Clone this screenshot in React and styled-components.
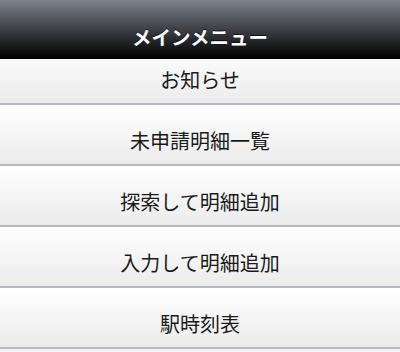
import styled, { createGlobalStyle } from "styled-components";

const GlobalStyle = createGlobalStyle`
  html, body {
    margin: 0;
    padding: 0;
    background: #ffffff;
  }
  body {
    font-family: "Noto Sans CJK JP", "Noto Sans", sans-serif;
  }
`;

const menuItems = [
  "お知らせ",
  "未申請明細一覧",
  "探索して明細追加",
  "入力して明細追加",
  "駅時刻表",
];

const Page = () => {
  return (
    <>
      <GlobalStyle />
      <Screen>
        <Header>
          <Title>メインメニュー</Title>
        </Header>
        <MenuList>
          {menuItems.map((label) => (
            <MenuRow key={label}>{label}</MenuRow>
          ))}
        </MenuList>
      </Screen>
    </>
  );
};

const Screen = styled.div`
  width: 400px;
  height: 352px;
  overflow: hidden;
  background: #f4f4f4;
`;

const Header = styled.header`
  position: relative;
  z-index: 1;
  height: 59px;
  box-sizing: border-box;
  padding-top: 16px;
  display: flex;
  justify-content: center;
  background: linear-gradient(to bottom, #7d828b 0%, #3c3f45 50%, #111214 85%, #000 100%);
`;

const Title = styled.h1`
  margin: 0;
  color: #ffffff;
  font-size: 19.5px;
  font-weight: bold;
  line-height: 42px;
  letter-spacing: 0;
  text-shadow: 0 -1px 0 rgba(0, 0, 0, 0.7);
`;

const MenuList = styled.nav`
  margin-top: -15px;
  display: flex;
  flex-direction: column;
`;

const MenuRow = styled.div`
  height: 61px;
  box-sizing: border-box;
  padding-top: 12px;
  display: flex;
  align-items: center;
  justify-content: center;
  color: #1a1a1a;
  font-size: 20px;
  background: linear-gradient(to bottom, #ffffff 0%, #f3f3f3 60%, #ebebeb 100%);
  border-bottom: 2px solid #b4b9c1;
`;

export default Page;
